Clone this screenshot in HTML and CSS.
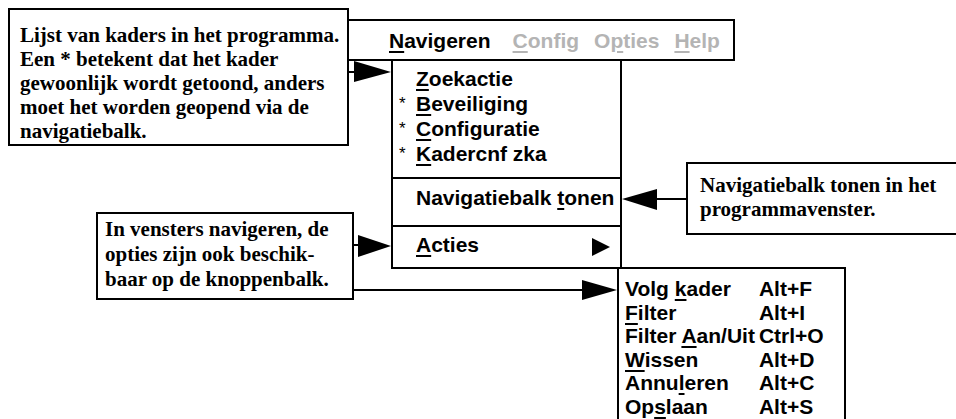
FILE: index.html
```html
<!DOCTYPE HTML>
<html lang="nl">
<head>
<meta http-equiv="Content-Type" content="text/html; charset=utf-8">
<title>Navigeren</title>
<link rel="stylesheet" href="styles.css">
</head>

<body>
<div class="diagram">
	<!-- toelichtingen -->
	<div class="note note-frames">Lijst van kaders in het programma.<br>Een * betekent dat het kader<br>gewoonlijk wordt getoond, anders<br>moet het worden geopend via de<br>navigatiebalk.</div>
	<div class="note note-toggle">Navigatiebalk tonen in het<br>programmavenster.</div>
	<div class="note note-actions">In vensters navigeren, de<br>opties zijn ook beschik-<br>baar op de knoppenbalk.</div>

	<!-- menubalk -->
	<div class="menubar">
		<span class="menubar-item"><u>N</u>avigeren</span>
		<span class="menubar-item disabled"><u>C</u>onfig</span>
		<span class="menubar-item disabled">O<u>p</u>ties</span>
		<span class="menubar-item disabled"><u>H</u>elp</span>
	</div>

	<div class="dropdown">
		<ul class="menu-group frames">
			<li><span class="mark"></span><u>Z</u>oekactie</li>
			<li><span class="mark">*</span><u>B</u>eveiliging</li>
			<li><span class="mark">*</span><u>C</u>onfiguratie</li>
			<li><span class="mark">*</span><u>K</u>adercnf zka</li>
		</ul>
		<div class="menu-group toggle"><span class="mark"></span>Navigatiebalk <u>t</u>onen</div>
		<div class="menu-group actions">
			<span class="mark"></span><u>A</u>cties
			<svg class="sub-arrow" width="18" height="18" viewBox="0 0 18 18"><polygon points="0,0 18,9 0,18" fill="#000"/></svg>
		</div>
	</div>

	<div class="submenu">
		<span>Volg <u>k</u>ader</span><span>Alt+F</span>
		<span><u>F</u>ilter</span><span>Alt+I</span>
		<span>Filter <u>A</u>an/Uit</span><span>Ctrl+O</span>
		<span><u>W</u>issen</span><span>Alt+D</span>
		<span>Annu<u>l</u>eren</span><span>Alt+C</span>
		<span>Op<u>s</u>laan</span><span>Alt+S</span>
	</div>

	<!-- pijlen -->
	<svg class="arrows" width="956" height="419" viewBox="0 0 956 419">
		<g stroke="#000" stroke-width="2">
			<line x1="349" y1="72" x2="356" y2="72"/>
			<line x1="657" y1="199" x2="686" y2="199"/>
			<line x1="354" y1="245" x2="360" y2="245"/>
			<line x1="354" y1="290" x2="584" y2="290"/>
		</g>
		<g fill="#000">
			<polygon points="354,61 391,72 354,82"/>
			<polygon points="657,189 622,199 657,210"/>
			<polygon points="358,235 391,246 358,257"/>
			<polygon points="582,280 617,290 582,300"/>
		</g>
	</svg>
</div>
</body>
</html>
```

FILE: styles.css
```css
*{
	margin: 0;
	padding: 0;
	box-sizing: border-box;
}

body{
	background-color: #fff;
	color: #000;
}

.diagram{
	position: relative;
	width: 956px;
	height: 419px;
	overflow: hidden;
	font-family: "Liberation Sans", Arial, sans-serif;
	font-weight: bold;
	font-size: 21px;
}

u{
	text-decoration: underline;
	text-decoration-thickness: 2px;
	text-underline-offset: 3px;
}

/* toelichtingen */
.note{
	position: absolute;
	border: 2px solid #000;
	background-color: #fff;
	font-family: "Liberation Serif", "Times New Roman", serif;
	font-weight: bold;
	font-size: 21px;
	line-height: 24px;
	white-space: nowrap;
}
.note-frames{
	left: 8px;
	top: 8px;
	width: 341px;
	height: 138px;
	padding: 13px 0 0 10px;
}
.note-toggle{
	left: 686px;
	top: 162px;
	width: 300px;
	height: 73px;
	padding: 9px 0 0 12px;
}
.note-actions{
	left: 96px;
	top: 212px;
	width: 258px;
	height: 88px;
	padding: 3px 0 0 7px;
	line-height: 25px;
}

/* menubalk */
.menubar{
	position: absolute;
	left: 349px;
	top: 19px;
	width: 386px;
	height: 42px;
	border: 2px solid #000;
	border-left: none;
	display: flex;
	align-items: center;
	gap: 15px;
	padding-left: 40px;
	line-height: 25px;
}
.menubar-item:first-child{
	margin-right: 7px;
}
.menubar-item.disabled{
	color: #b4b4b4;
}

.dropdown{
	position: absolute;
	left: 391px;
	top: 61px;
	width: 231px;
	border: 2px solid #000;
	border-top: none;
	background-color: #fff;
	line-height: 25px;
}
.menu-group{
	list-style: none;
	display: block;
}
.menu-group li{
	display: block;
}
.frames{
	height: 116px;
	padding-top: 5px;
}
.toggle{
	height: 48px;
	border-top: 2px solid #000;
	padding-top: 6px;
}
.actions{
	height: 42px;
	border-top: 2px solid #000;
	padding-top: 5px;
	display: flex;
	align-items: flex-start;
}
.mark{
	display: inline-block;
	width: 23px;
	padding-left: 6px;
	font-weight: normal;
	font-size: 17px;
	vertical-align: top;
}
.sub-arrow{
	margin-left: auto;
	margin-right: 10px;
	margin-top: 6px;
}

.submenu{
	position: absolute;
	left: 617px;
	top: 267px;
	width: 229px;
	height: 170px;
	border: 2px solid #000;
	border-bottom: none;
	background-color: #fff;
	display: grid;
	grid-template-columns: auto auto;
	grid-auto-rows: 23.6px;
	align-content: start;
	justify-content: start;
	column-gap: 4px;
	padding: 8px 0 0 6px;
	line-height: 23.6px;
	white-space: nowrap;
}

.arrows{
	position: absolute;
	left: 0;
	top: 0;
	pointer-events: none;
}
```
